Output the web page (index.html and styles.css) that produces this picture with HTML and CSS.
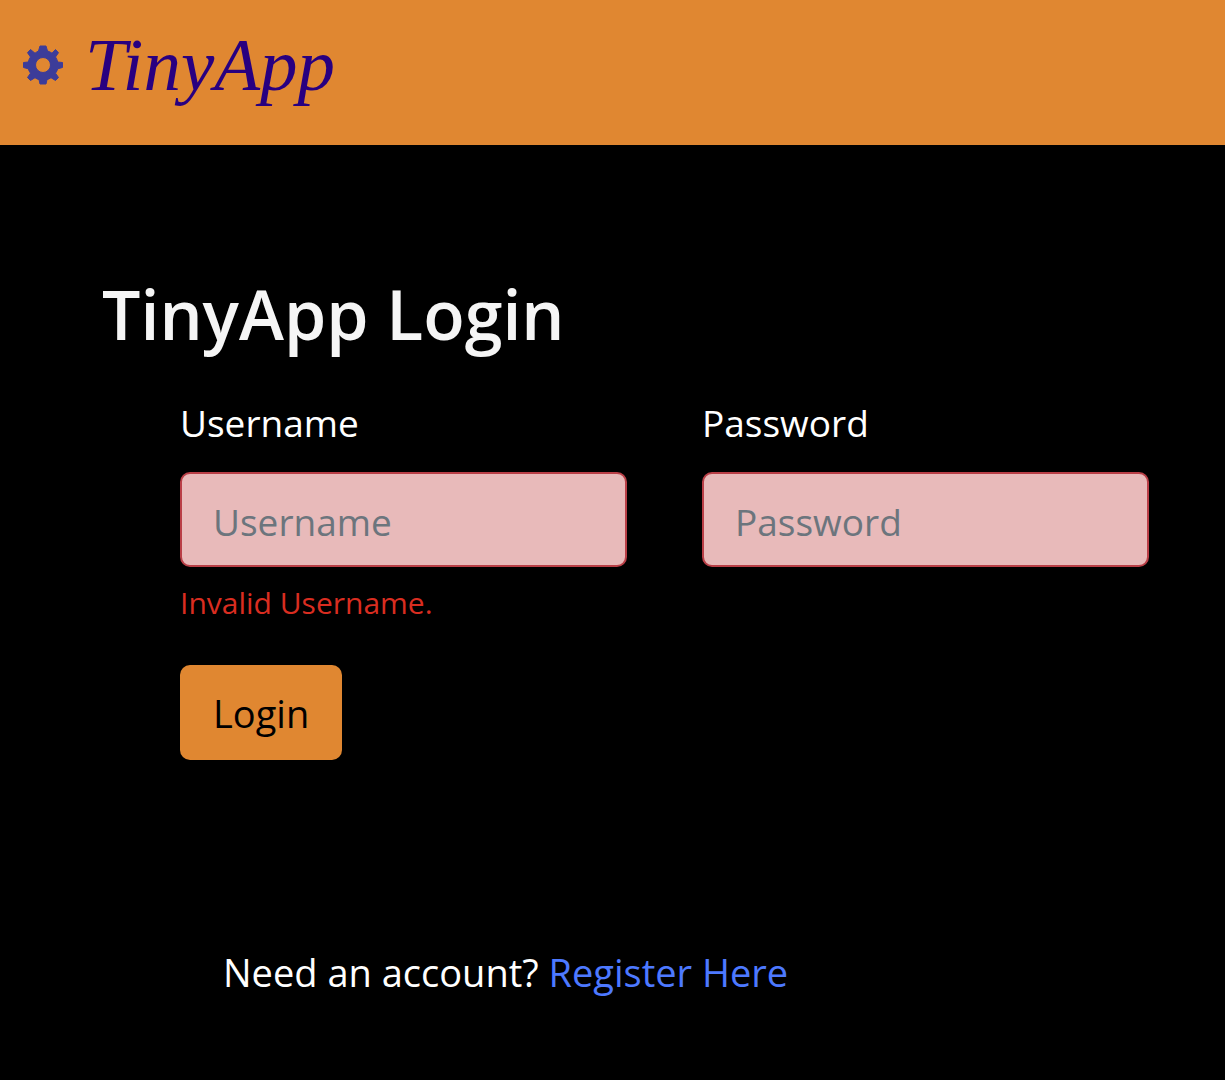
FILE: index.html
```html
<!DOCTYPE html>
<html lang="en">
<head>
  <meta charset="utf-8">
  <meta name="viewport" content="width=device-width, initial-scale=1">
  <title>TinyApp Login</title>
  <link rel="stylesheet" href="styles.css">
</head>
<body>
  <header class="navbar">
    <a class="brand" href="#">
      <svg class="brand-icon" viewBox="0 0 40 40" aria-hidden="true">
        <path fill="#3c3c99" stroke="#3c3c99" stroke-linejoin="round" fill-rule="evenodd" d="M17 1h6l1.500 5q2.500.700 4.500 2.200L32.500 4.500l3 3.200-3 4.300q1.600 2.200 2.200 5L39.500 17.500v5l-4.800 1.300q-.700 2.400-2.200 4.400l3 4.300-3 3-4.500-2.800q-2 1.300-4 1.900L23 39h-6l-1-4.400q-2.200-.600-4-1.900l-4.500 2.800-3-3 3-4.300q-1.500-2-2.200-4.400L.500 22.500v-5L5.300 17q.600-2.800 2.200-5l-3-4.300 3-3.200L12 8.200q2-1.500 3.500-2.200zM20 12.500a7.500 7.500 0 1 0 0 15 7.500 7.500 0 0 0 0-15z"/>
      </svg>
      <span class="brand-name">TinyApp</span>
    </a>
  </header>

  <main class="page">
    <h1 class="title">TinyApp Login</h1>

    <form class="login-form">
      <div class="field">
        <label for="username">Username</label>
        <input class="control" id="username" type="text" placeholder="Username" aria-describedby="username-error">
        <p class="error" id="username-error">Invalid Username.</p>
      </div>
      <div class="field">
        <label for="password">Password</label>
        <input class="control" id="password" type="password" placeholder="Password">
      </div>
      <div class="actions">
        <button class="button" type="submit">Login</button>
      </div>
    </form>

    <p class="register">Need an account? <a href="#">Register Here</a></p>
  </main>
</body>
</html>
```

FILE: styles.css
```css
* {
  box-sizing: border-box;
}

body {
  margin: 0;
  background: #000;
  color: #fff;
  font-family: "Segoe UI", "Open Sans", "Noto Sans", sans-serif;
  font-size: 38px;
  line-height: 60px;
}

.navbar {
  padding: 23px 23px 38px;
  background: #e08731;
}

.brand {
  display: inline-flex;
  align-items: center;
  gap: 22px;
  color: #280080;
  text-decoration: none;
}

.brand-icon {
  width: 40px;
  height: 40px;
}

.brand-name {
  font-family: "Liberation Serif", serif;
  font-size: 75px;
  font-style: italic;
  line-height: 84px;
}

.page {
  padding: 127px 76px 76px 102px;
}

.title {
  margin: 0 0 37px;
  color: #f5f5f5;
  font-size: 68px;
  font-weight: 600;
  line-height: 84px;
}

.login-form {
  display: grid;
  grid-template-columns: 1fr 1fr;
  column-gap: 75px;
  row-gap: 38px;
  padding-left: 78px;
}

.field {
  font-size: 37px;
}

.field label {
  display: block;
  margin-bottom: 19px;
}

.control {
  display: block;
  width: 100%;
  height: 95px;
  padding: 4px 31px 0;
  border: 2px solid #b93f47;
  border-radius: 10px;
  background: #e8baba;
  color: #212529;
  font: inherit;
}

.control::placeholder {
  color: #6c757d;
  opacity: 1;
}

.error {
  margin: 12px 0 0;
  color: #d92d20;
  font-size: 30px;
  line-height: 48px;
}

.actions {
  grid-column: 1 / -1;
}

.button {
  display: block;
  height: 95px;
  padding: 0 33px;
  border: 0;
  border-radius: 10px;
  background: #e08731;
  color: #000;
  font: inherit;
}

.register {
  margin: 182px 0 0 121px;
}

.register a {
  color: #4d79ff;
  text-decoration: none;
}
```
